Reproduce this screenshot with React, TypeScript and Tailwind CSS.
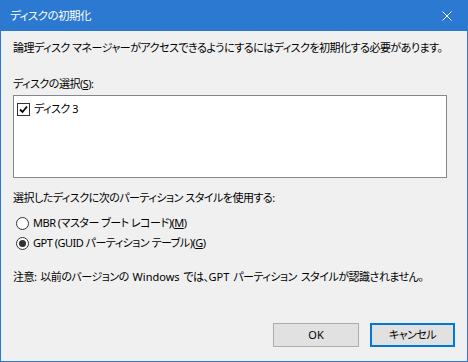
import { useState } from 'react'

const font = "[font-family:'Noto_Sans','Noto_Sans_CJK_JP',sans-serif] [font-feature-settings:'palt']"

function Checkbox({ checked }: { checked: boolean }) {
  return (
    <span className="flex h-[13px] w-[13px] items-center justify-center border border-[#333] bg-white">
      {checked && (
        <svg width="9" height="9" viewBox="0 0 9 9">
          <path d="M1 4.5 L3.5 7 L8 1.5" fill="none" stroke="#000" strokeWidth="1.8" />
        </svg>
      )}
    </span>
  )
}

function Radio({ checked }: { checked: boolean }) {
  return (
    <span className="flex h-[13px] w-[13px] items-center justify-center rounded-full border border-[#333] bg-white">
      {checked && <span className="h-[7px] w-[7px] rounded-full bg-[#333]" />}
    </span>
  )
}

export default function App() {
  const [style, setStyle] = useState<'mbr' | 'gpt'>('gpt')
  const [disk, setDisk] = useState(true)

  return (
    <div className={`flex h-[362px] w-[468px] flex-col border border-[#2b79d0] bg-[#f0f0f0] text-[11px] leading-[16px] tracking-[-0.5px] whitespace-nowrap text-black ${font}`}>
      <div className="flex h-[30px] shrink-0 items-center justify-between bg-[#2b79d0] pl-[9px] pr-[10px] text-[11.5px] text-white">
        <span>ディスクの初期化</span>
        <svg width="10" height="10" viewBox="0 0 10 10" className="mr-[5px]">
          <path d="M0.5 0.5 L9.5 9.5 M9.5 0.5 L0.5 9.5" stroke="#fff" strokeWidth="1" />
        </svg>
      </div>

      <div className="flex flex-1 flex-col px-[12px] pt-[9px] pb-[14px]">
        <p>論理ディスク マネージャーがアクセスできるようにするにはディスクを初期化する必要があります。</p>

        <p className="mt-[20px]">
          ディスクの選択(<span className="underline">S</span>):
        </p>
        <div className="mt-[3px] h-[83px] w-[434px] border border-[#828790] bg-white px-[3px] pt-[5px]">
          <label className="flex cursor-default items-center gap-[4px]" onClick={() => setDisk(!disk)}>
            <Checkbox checked={disk} />
            <span>ディスク 3</span>
          </label>
        </div>

        <p className="mt-[12px]">選択したディスクに次のパーティション スタイルを使用する:</p>
        <div className="mt-[9px] flex flex-col gap-[4px] pl-[3px]">
          <label className="flex cursor-default items-center gap-[4px]" onClick={() => setStyle('mbr')}>
            <Radio checked={style === 'mbr'} />
            <span>
              MBR (マスター ブート レコード)(<span className="underline">M</span>)
            </span>
          </label>
          <label className="flex cursor-default items-center gap-[4px]" onClick={() => setStyle('gpt')}>
            <Radio checked={style === 'gpt'} />
            <span>
              GPT (GUID パーティション テーブル)(<span className="underline">G</span>)
            </span>
          </label>
        </div>

        <p className="mt-[18px] [word-spacing:1.5px]">
          注意: 以前のバージョンの <span className="tracking-normal">Windows</span> では、<span className="tracking-normal">GPT</span> パーティション スタイルが認識されません。
        </p>

        <div className="mt-auto flex justify-end gap-[11px]">
          <button type="button" className="h-[24px] w-[86px] border border-[#adadad] bg-[#e1e1e1] tracking-normal">
            OK
          </button>
          <button type="button" className="h-[24px] w-[85px] border-2 border-[#0078d7] bg-[#e1e1e1]">
            キャンセル
          </button>
        </div>
      </div>
    </div>
  )
}
